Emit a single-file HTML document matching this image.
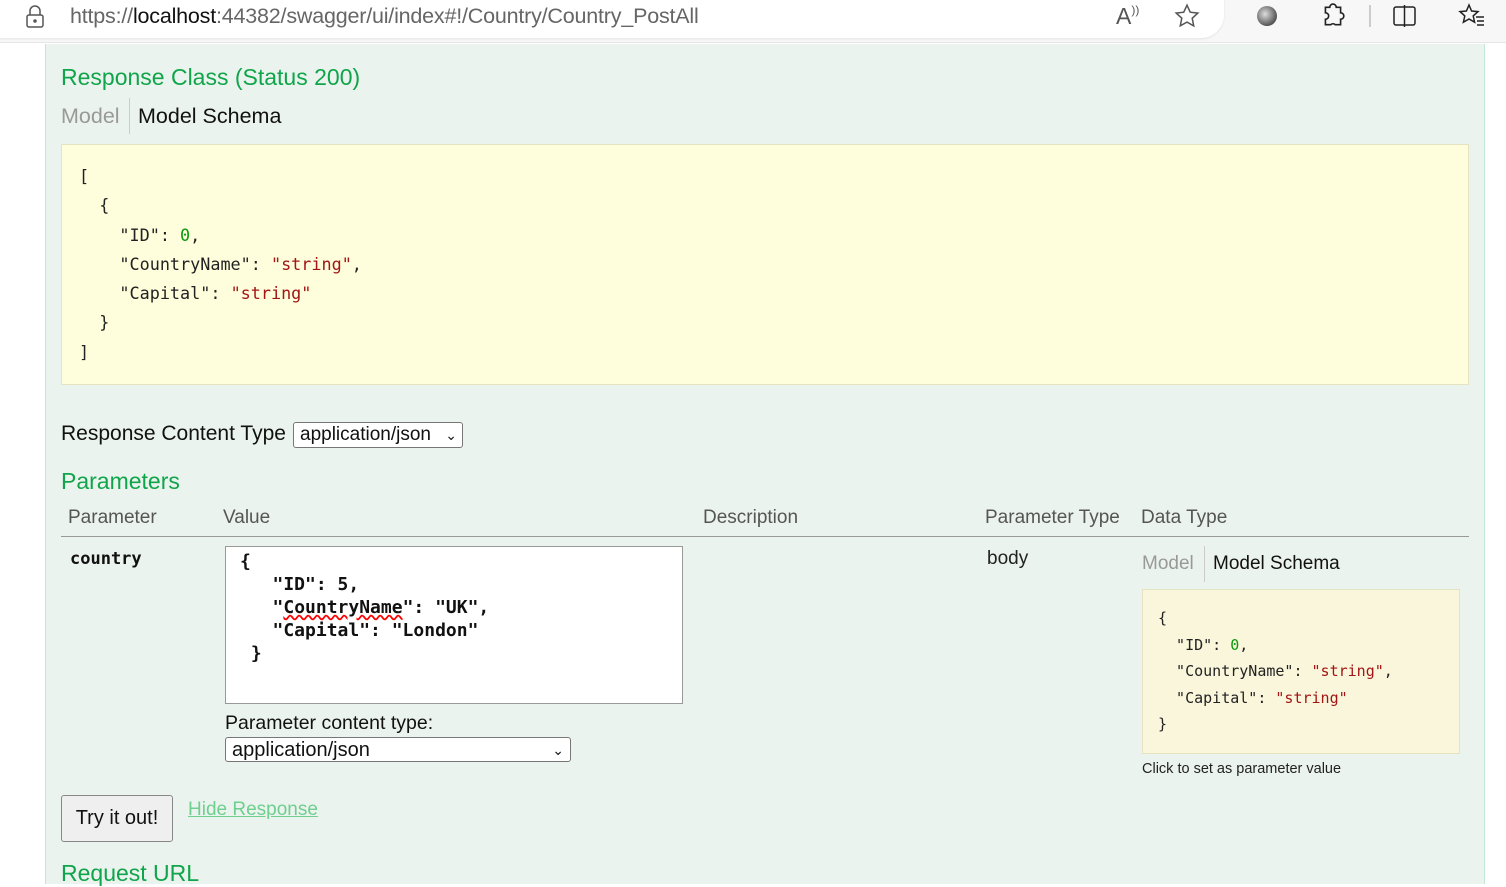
<!DOCTYPE html>
<html><head><meta charset="utf-8"><style>
*{margin:0;padding:0;box-sizing:border-box}
body{width:1506px;height:882px;overflow:hidden;background:#fff;font-family:"Liberation Sans",sans-serif;position:relative}
.bar{position:absolute;left:0;top:0;width:1506px;height:43px;background:#f7f7f7;border-bottom:1px solid #e6e6e6}
.pill{position:absolute;left:-20px;top:-8px;width:1244px;height:46px;background:#fff;border-radius:0 0 23px 0;box-shadow:0 1px 2px rgba(0,0,0,.08)}
.url{position:absolute;left:70px;top:4px;font-size:21.5px;color:#666;letter-spacing:-.2px}
.url b{font-weight:normal;color:#111}
.panel{position:absolute;left:45px;top:44px;width:1440px;height:840px;background:#ebf3ef;border-left:1px solid #c4e6d2;border-right:1px solid #c4e6d2}
.a{position:absolute;white-space:nowrap}
pre.a{white-space:pre}
.h{color:#10a54a;font-size:23px}
.code{font-family:"DejaVu Sans Mono","Liberation Mono",monospace;color:#222}
.s{color:#a31515}.g{color:#0a9a0a}
.sel{position:absolute;background:#fff;border:1px solid #767676;border-radius:3px;font-size:20px;color:#111}
</style></head><body>
<div class="bar"><div class="pill"></div>
<svg class="a" style="left:25px;top:5px" width="20" height="24" viewBox="0 0 20 24" fill="none" stroke="#555" stroke-width="1.5"><path d="M5 10V6a5 5 0 0 1 10 0v4"/><rect x="2" y="10" width="16" height="12" rx="2"/><circle cx="10" cy="16" r="1" fill="#555"/></svg>
<div class="url">https://<b>localhost</b>:44382/swagger/ui/index#!/Country/Country_PostAll</div>
<div class="a" style="left:1116px;top:3px;font-size:23px;color:#555">A<span style="font-size:12px;vertical-align:top">))</span></div>
<svg class="a" style="left:1174px;top:3px" width="26" height="26" viewBox="0 0 24 24" fill="none" stroke="#555" stroke-width="1.4"><path d="M12 2l3 6.5 7 .8-5.2 4.8 1.4 7L12 17.6 5.8 21l1.4-7L2 9.3l7-.8z"/></svg>
<div class="a" style="left:1257px;top:6px;width:20px;height:20px;border-radius:50%;background:radial-gradient(circle at 40% 40%,#ddd,#555 70%)"></div>
<svg class="a" style="left:1320px;top:3px" width="26" height="26" viewBox="0 0 24 24" fill="none" stroke="#222" stroke-width="1.5"><path d="M9 4a3 3 0 0 1 6 0h4v5a3 3 0 0 1 0 6v5h-5a3 3 0 0 0-4 0H5v-5a3 3 0 0 0 0-6V4z"/></svg>
<div class="a" style="left:1369px;top:5px;width:2px;height:22px;background:#ccc"></div>
<svg class="a" style="left:1392px;top:4px" width="26" height="24" viewBox="0 0 26 24" fill="none" stroke="#222" stroke-width="1.5"><rect x="2" y="3" width="21" height="18" rx="2"/><path d="M12.5 1v22"/></svg>
<svg class="a" style="left:1458px;top:3px" width="28" height="26" viewBox="0 0 28 26" fill="none" stroke="#222" stroke-width="1.5"><path d="M11 2l2.6 6 6.4.6-4.8 4.3 1.4 6.3L11 16l-5.6 3.2 1.4-6.3L2 8.6l6.4-.6z"/><path d="M18 14h8M19 18h7M19 22h7"/></svg>
</div>
<div class="panel"></div>
<div class="a h" style="left:61px;top:64px">Response Class (Status 200)</div>
<div class="a" style="left:61px;top:104px;font-size:21.5px;color:#999">Model</div>
<div class="a" style="left:129px;top:98px;width:1px;height:36px;background:#ccc"></div>
<div class="a" style="left:138px;top:104px;font-size:21.5px;color:#111">Model Schema</div>
<div class="a" style="left:61px;top:144px;width:1408px;height:241px;background:#fefedd;border:1px solid #e6e3c0"></div>
<pre class="a code" style="left:79px;top:162px;font-size:16.8px;line-height:29.3px">[
  {
    "ID": <span class="g">0</span>,
    "CountryName": <span class="s">"string"</span>,
    "Capital": <span class="s">"string"</span>
  }
]</pre>
<div class="a" style="left:61px;top:422px;font-size:21px;color:#111">Response Content Type</div>
<div class="sel" style="left:293px;top:422px;width:170px;height:26px;padding:0 0 0 6px;line-height:24px;font-size:19px">application/json <span style="position:absolute;right:5px;font-size:14px">&#8964;</span></div>
<div class="a h" style="left:61px;top:468px">Parameters</div>
<div class="a" style="left:68px;top:507px;font-size:19px;color:#555">Parameter</div>
<div class="a" style="left:223px;top:507px;font-size:19px;color:#555">Value</div>
<div class="a" style="left:703px;top:507px;font-size:19px;color:#555">Description</div>
<div class="a" style="left:985px;top:507px;font-size:19px;color:#555">Parameter Type</div>
<div class="a" style="left:1141px;top:507px;font-size:19px;color:#555">Data Type</div>
<div class="a" style="left:61px;top:536px;width:1408px;height:1px;background:#999"></div>
<div class="a code" style="left:70px;top:549px;font-size:17px;font-weight:bold;color:#111">country</div>
<div class="a" style="left:225px;top:546px;width:458px;height:158px;background:#fff;border:1px solid #999"></div>
<pre class="a code" style="left:240px;top:550px;font-size:18px;line-height:23px;font-weight:bold;color:#111">{
   "ID": 5,
   "<span style="text-decoration:underline wavy red">CountryName</span>": "UK",
   "Capital": "London"
 }</pre>
<div class="a" style="left:225px;top:712px;font-size:19.5px;color:#111">Parameter content type:</div>
<div class="sel" style="left:225px;top:737px;width:346px;height:25px;padding-left:6px;line-height:24px">application/json<span style="position:absolute;right:6px;font-size:14px">&#8964;</span></div>
<div class="a" style="left:987px;top:548px;font-size:19px;color:#222">body</div>
<div class="a" style="left:1142px;top:553px;font-size:19px;color:#999">Model</div>
<div class="a" style="left:1204px;top:546px;width:1px;height:36px;background:#ccc"></div>
<div class="a" style="left:1213px;top:553px;font-size:19px;color:#111">Model Schema</div>
<div class="a" style="left:1142px;top:589px;width:318px;height:165px;background:#faf6dc;border:1px solid #e6e3c0"></div>
<pre class="a code" style="left:1158px;top:605px;font-size:15px;line-height:26.5px">{
  "ID": <span class="g">0</span>,
  "CountryName": <span class="s">"string"</span>,
  "Capital": <span class="s">"string"</span>
}</pre>
<div class="a" style="left:1142px;top:761px;font-size:14.5px;color:#222">Click to set as parameter value</div>
<div class="a" style="left:61px;top:795px;width:112px;height:47px;background:#efefef;border:1px solid #888;border-radius:3px;font-size:20px;color:#111;text-align:center;line-height:45px">Try it out!</div>
<div class="a" style="left:188px;top:799px;font-size:19px;color:#6fcf8f;text-decoration:underline">Hide Response</div>
<div class="a h" style="left:61px;top:860px">Request URL</div>
</body></html>
